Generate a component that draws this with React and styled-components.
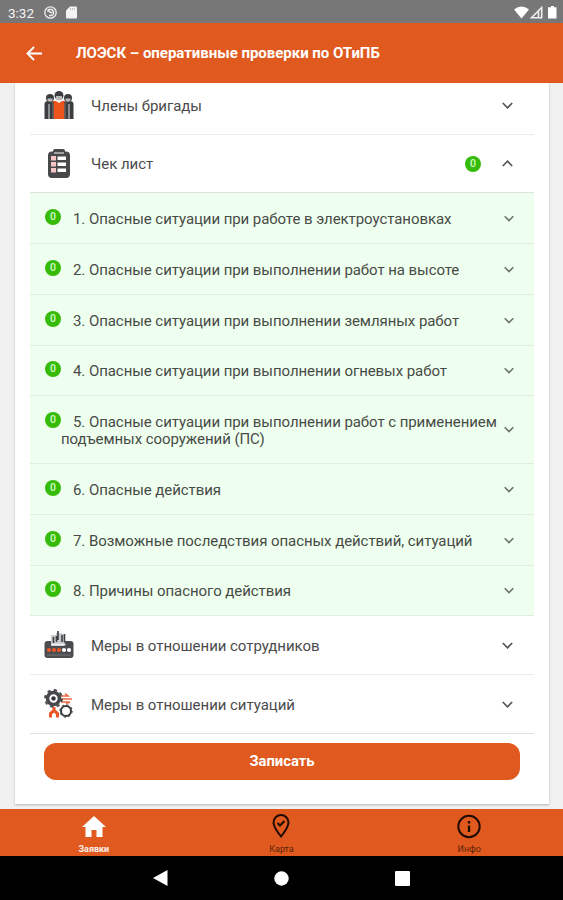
import React from "react";
import styled, { createGlobalStyle } from "styled-components";

const ORANGE = "#e05a1f";

const GlobalStyle = createGlobalStyle`
  * { box-sizing: border-box; }
  body { margin: 0; background: #f0f0f0; font-family: Roboto, "Noto Sans", sans-serif; overflow: hidden; }
  svg { display: block; flex: none; }
`;

const Screen = styled.div`
  width: 563px;
  height: 900px;
  display: flex;
  flex-direction: column;
  background: #f0f0f0;
`;

const StatusBar = styled.div`
  height: 23px;
  flex: none;
  display: flex;
  align-items: center;
  padding: 2px 6px 0 8px;
  background: #777;
  color: #f4f4f4;
  font-size: 13.5px;
  line-height: 20px;
`;

const Clock = styled.span`
  width: 36px;
`;

const StatusIcons = styled.div`
  display: flex;
  align-items: center;
  gap: ${(p) => p.$gap}px;
  margin-left: ${(p) => (p.$end ? "auto" : "0")};
`;

const AppBar = styled.header`
  height: 60px;
  flex: none;
  display: flex;
  align-items: center;
  gap: 33px;
  padding-left: 26px;
  background: ${ORANGE};
  color: #fff;
`;

const Title = styled.h1`
  margin: 0;
  font-size: 15px;
  font-weight: 700;
  line-height: 20px;
  letter-spacing: -0.02px;
  white-space: nowrap;
`;

const Body = styled.main`
  height: 726px;
  flex: none;
  padding: 0 14px 0 15px;
`;

const Card = styled.section`
  height: 721px;
  padding: 0 15px;
  background: #fff;
  box-shadow: 0 1px 2px rgba(60, 80, 85, 0.35);
  clip-path: inset(0 -4px -4px -4px);
`;

const SectionRow = styled.div`
  height: ${(p) => p.$height}px;
  padding: 0 21px ${(p) => p.$bottom || 0}px 14px;
  display: flex;
  align-items: center;
  border-bottom: 1px solid ${(p) => (p.$strong ? "#dfe2df" : "#ececec")};
  color: #4b4b4b;
`;

const SectionLabel = styled.span`
  margin: 1px 0 0 17px;
  flex: 1;
  font-size: 15px;
  line-height: 20px;
  letter-spacing: -0.04px;
  white-space: nowrap;
`;

const Badge = styled.span`
  width: 16px;
  height: 16px;
  flex: none;
  display: flex;
  align-items: center;
  justify-content: center;
  border-radius: 50%;
  background: #36bc08;
  color: #d4fac8;
  font-size: 10.5px;
  line-height: 16px;
  font-weight: 500;
  margin: ${(p) => p.$top || 0}px ${(p) => p.$right || 0}px 0 0;
`;

const CheckRow = styled.div`
  height: ${(p) => p.$height}px;
  padding: 0 20px 0 15px;
  display: flex;
  align-items: center;
  background: #efffef;
  border-bottom: 1px solid #e0eee0;
  color: #474b47;
`;

const CheckContent = styled.div`
  flex: 1;
  min-width: 0;
  display: flex;
  align-items: flex-start;
`;

const CheckLabel = styled.p`
  margin: 3px 0 0;
  font-size: 15px;
  line-height: 17.5px;
  text-indent: 12px;
  letter-spacing: -0.065px;
  white-space: nowrap;
`;

const SaveButton = styled.button`
  display: block;
  width: 476px;
  height: 37px;
  margin: 9px 0 0 14px;
  padding: 0;
  border: 0;
  border-radius: 12px;
  background: ${ORANGE};
  color: #fff;
  font: 700 14.8px/37px Roboto, sans-serif;
`;

const TabBar = styled.nav`
  height: 47px;
  flex: none;
  display: grid;
  grid-template-columns: repeat(3, 1fr);
  background: ${ORANGE};
`;

const Tab = styled.div`
  display: flex;
  flex-direction: column;
  align-items: center;
  padding-top: 4px;
  color: ${(p) => (p.$active ? "#fff" : "#200b02")};
`;

const TabLabel = styled.span`
  margin-top: 5px;
  font-size: 9px;
  line-height: 10px;
  font-weight: ${(p) => (p.$active ? 700 : 400)};
  opacity: ${(p) => (p.$active ? 0.9 : 0.7)};
`;

const SystemBar = styled.div`
  height: 44px;
  flex: none;
  display: flex;
  align-items: center;
  justify-content: center;
  gap: 106px;
  background: #000;
`;

const Chevron = ({ up, size = 11, color = "#555" }) => (
  <svg width={size} height="7" viewBox="0 0 11 7" fill="none" stroke={color} strokeWidth="1.7">
    <path d={up ? "M.8 6L5.5 1.2L10.2 6" : "M.8 1L5.5 5.8L10.2 1"} />
  </svg>
);

const CrewIcon = () => (
  <svg width="30" height="30" viewBox="0 0 30 30">
    <g fill="#3b3d40">
      <path d="M.5 29V14q0-3 4-3h4v18zM29.500 29V14q0-3-4-3h-4v18z" />
      <circle cx="6" cy="8" r="4" />
      <circle cx="24" cy="8" r="4" />
      <circle cx="15" cy="5.500" r="4.500" />
    </g>
    <path d="M3.500 8.500h5v2q-2.500 2.500-5 0zM21.500 8.500h5v2q-2.500 2.500-5 0zM12 6h6v3q-3 3-6 0z" fill="#b9b9b9" />
    <path d="M9.500 29V14l-1-3h13l-1 3v15z" fill="#eb551b" />
    <path d="M12 11l3 2L18 11z" fill="#fff" />
    <path d="M5 14v15M25 14v15" stroke="#ddd" />
    <path d="M9 12v17M21 12v17" stroke="#333" strokeWidth="1.300" />
  </svg>
);

const ChecklistIcon = () => (
  <svg width="30" height="30" viewBox="0 0 30 30">
    <rect x="4" y="2.500" width="22" height="26.500" rx="4" fill="#48494b" />
    <rect x="9" y="0" width="12" height="5" rx="2" fill="#48494b" />
    <path d="M10 4h10" stroke="#ddd" strokeWidth="1.200" />
    <path d="M13.500 7.500H22v3.500h-8.500zM13.500 13.500H22V17h-8.500zM13.500 19.500H22V23h-8.500z" fill="#fff" />
    <path d="M7 7h5v4.500H7zM7 13h5v4.500H7zM7 19h5v4.500H7z" fill="#f6c6c6" />
  </svg>
);

const StaffMeasuresIcon = () => (
  <svg width="30" height="30" viewBox="0 0 30 30">
    <path d="M.5 14q0-3 3-3h23q3 0 3 3v11q0 3-3 3h-23q-3 0-3-3z" fill="#4a4c50" />
    <path d="M7 5h5V3h6v1h2.500v12H7z" fill="#c8cacc" />
    <path d="M9.500 7v6M12.500 6v6M14 1v9M18 5v7M20.500 4v8" stroke="#3e4043" strokeWidth="1.600" />
    <path d="M7.500 14.500h14" stroke="#eee" strokeWidth="1.500" />
    <g fill="#ef5827"><circle cx="5" cy="20" r="2.100" /><circle cx="10" cy="20" r="2.100" /><circle cx="15" cy="20" r="2.100" /></g>
    <g fill="#fff"><circle cx="20" cy="20" r="2.100" /><circle cx="25" cy="20" r="2.100" /></g>
    <path d="M3 25h24" stroke="#707276" />
  </svg>
);

const SituationMeasuresIcon = () => (
  <svg width="30" height="30" viewBox="0 0 30 30">
    <path d="M16 7h8l-3-2.500M18 10h10M17 13h9l-4 1.500" fill="none" stroke="#e76c45" strokeWidth="1.600" />
    <circle cx="9.500" cy="9.500" r="6" fill="#fff" stroke="#46484b" strokeWidth="3.600" />
    <circle cx="9.500" cy="9.500" r="8.500" fill="none" stroke="#46484b" strokeWidth="1.800" strokeDasharray="3.400 3.275" />
    <circle cx="9.500" cy="9.500" r="2.200" fill="#333" />
    <path d="M6.500 28.500v-4l3.500-3 3.500 3v4M10 18v4" fill="none" stroke="#ee5525" strokeWidth="3" />
    <circle cx="22" cy="22" r="5" fill="#fff" stroke="#393b3d" strokeWidth="2" />
    <circle cx="22" cy="22" r="6.200" fill="none" stroke="#393b3d" strokeDasharray="2.400 2.400" />
  </svg>
);

const checks = [
  { text: "1. Опасные ситуации при работе в электроустановках", height: 51 },
  { text: "2. Опасные ситуации при выполнении работ на высоте", height: 51 },
  { text: "3. Опасные ситуации при выполнении земляных работ", height: 51 },
  { text: "4. Опасные ситуации при выполнении огневых работ", height: 50 },
  {
    text: "5. Опасные ситуации при выполнении работ с применением",
    rest: "подъемных сооружений (ПС)",
    height: 68,
  },
  { text: "6. Опасные действия", height: 51 },
  { text: "7. Возможные последствия опасных действий, ситуаций", height: 51 },
  { text: "8. Причины опасного действия", height: 50 },
];

export default function App() {
  return (
    <Screen>
      <GlobalStyle />
      <StatusBar>
        <Clock>3:32</Clock>
        <StatusIcons $gap={9}>
          <svg width="13" height="13" viewBox="0 0 13 13" fill="none" stroke="#eee" strokeWidth="1.300">
            <circle cx="6.500" cy="6.500" r="5.700" />
            <path d="M3.500 5.500l1.500-2h3l1.500 2v2.500l-2 1.500H5M3.500 4l3 2.500H8.500" />
          </svg>
          <svg width="11" height="13" viewBox="0 0 11 13" fill="#f4f4f4">
            <path d="M4 .5h6q1 0 1 1v10q0 1-1 1H1q-1 0-1-1V4.500z" />
            <path d="M4.500 2v2M6.500 2v2M8.500 2v2" stroke="#aaa" strokeWidth=".7" />
          </svg>
        </StatusIcons>
        <StatusIcons $gap={1} $end>
          <svg width="15" height="13" viewBox="0 0 15 13" fill="#fff"><path d="M0 3.500Q7.500-2.500 15 3.500L7.500 12.500z" /></svg>
          <svg width="13" height="13" viewBox="0 0 13 13" fill="none" stroke="#eee" strokeWidth="1.600"><path d="M1.500 11.700L11.700 1.500V11.700z" /><path d="M8.500 5v6.500" /></svg>
          <svg width="13" height="13" viewBox="0 0 13 13" fill="#fff"><path d="M5 1.300h2V0h3v1.300h2.500V12.500H4V1.300z" /></svg>
        </StatusIcons>
      </StatusBar>
      <AppBar>
        <svg width="17" height="15" viewBox="0 0 17 15" fill="none" stroke="#fff" strokeWidth="1.900">
          <path d="M8 1L1.500 7.500L8 14M2 7.500H16" />
        </svg>
        <Title>ЛОЭСК – оперативные проверки по ОТиПБ</Title>
      </AppBar>
      <Body>
        <Card>
          <SectionRow $height={52} $bottom={7}>
            <CrewIcon />
            <SectionLabel>Члены бригады</SectionLabel>
            <Chevron />
          </SectionRow>
          <SectionRow $height={58} $strong>
            <ChecklistIcon />
            <SectionLabel>Чек лист</SectionLabel>
            <Badge $right={21}>0</Badge>
            <Chevron up />
          </SectionRow>
          {checks.map((item) => (
            <CheckRow key={item.text} $height={item.height}>
              <CheckContent>
                <Badge $top={1}>0</Badge>
                <CheckLabel>
                  {item.text}
                  {item.rest && <br />}
                  {item.rest}
                </CheckLabel>
              </CheckContent>
              <Chevron size={10} color="#6a706a" />
            </CheckRow>
          ))}
          <SectionRow $height={59}>
            <StaffMeasuresIcon />
            <SectionLabel>Меры в отношении сотрудников</SectionLabel>
            <Chevron />
          </SectionRow>
          <SectionRow $height={59} $strong>
            <SituationMeasuresIcon />
            <SectionLabel>Меры в отношении ситуаций</SectionLabel>
            <Chevron />
          </SectionRow>
          <SaveButton>Записать</SaveButton>
        </Card>
      </Body>
      <TabBar>
        <Tab $active>
          <svg width="24" height="26" viewBox="0 0 24 26" fill="currentColor"><path d="M12 3L0 14h3.500v10h6v-7h5v7h6V14H24z" /></svg>
          <TabLabel $active>Заявки</TabLabel>
        </Tab>
        <Tab>
          <svg width="24" height="26" viewBox="0 0 24 26" fill="none" stroke="currentColor" strokeWidth="2"><path d="M12 23.500C8 18.500 4.500 14 4.500 9.500a7.500 7.500 0 0 1 15 0C19.500 14 16 18.500 12 23.500z" /><path d="M8.500 10l2.500 2.500 4.500-4.500" /></svg>
          <TabLabel>Карта</TabLabel>
        </Tab>
        <Tab>
          <svg width="24" height="26" viewBox="0 0 24 26" fill="none" stroke="currentColor" strokeWidth="2"><circle cx="12" cy="13.500" r="10.700" /><path d="M12 12.500v6.500M12 8v2.500" strokeWidth="2.300" /></svg>
          <TabLabel>Инфо</TabLabel>
        </Tab>
      </TabBar>
      <SystemBar>
        <svg width="15" height="16" viewBox="0 0 15 16" fill="#fff"><path d="M0 8L14.500 0v16z" /></svg>
        <svg width="15" height="15" viewBox="0 0 15 15" fill="#fff"><circle cx="7.500" cy="7.500" r="7.200" /></svg>
        <svg width="15" height="15" viewBox="0 0 15 15" fill="#fff"><rect width="15" height="15" rx="1" /></svg>
      </SystemBar>
    </Screen>
  );
}
